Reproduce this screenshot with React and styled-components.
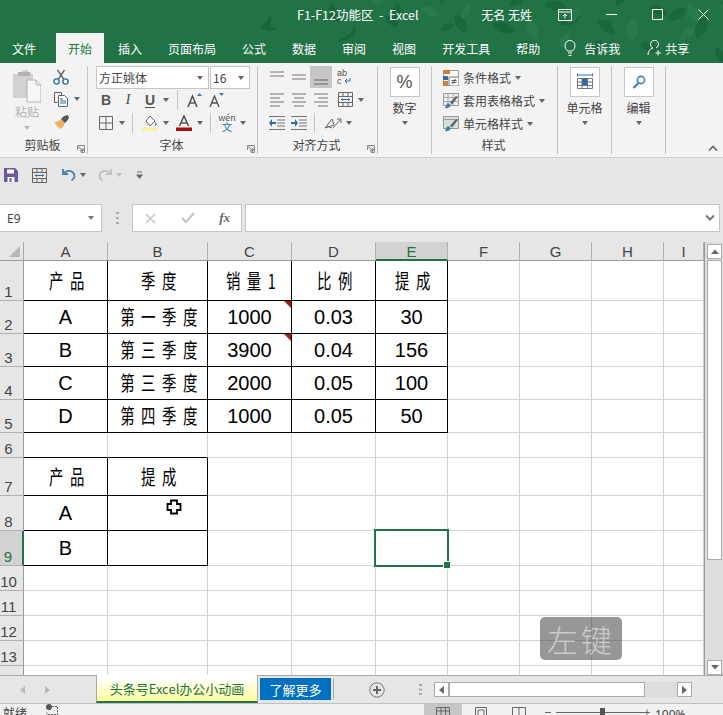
import React from "react";
import styled, { createGlobalStyle } from "styled-components";

const Global = createGlobalStyle`
  html, body { margin: 0; padding: 0; background: #fff; }
  * { box-sizing: border-box; }
`;
const UI = `"Noto Sans CJK SC", "Noto Sans", sans-serif`;

const Page = styled.div`
  width: 723px; height: 715px; overflow: hidden; display: flex; flex-direction: column;
  font-family: ${UI}; font-size: 12px; color: #444; background: #e6e6e6;
`;
const Header = styled.header`position: relative; height: 63px; flex: none; background: #217346; overflow: hidden;`;
const Leaves = styled.svg`position: absolute; inset: 0; pointer-events: none;`;
const TitleBar = styled.div`
  position: relative; height: 33px; display: flex; align-items: center; padding-left: 297px; color: #fff;
`;
const TitleText = styled.span`font-size: 12.5px; white-space: pre; margin-top: -4px;`;
const UserName = styled.span`margin-left: auto; margin-right: 18px; font-size: 12px; margin-top: -4px;`;
const TitleIcon = styled.div`width: ${p => p.$w}px; height: 28px; margin-top: -4px; display: flex; align-items: center; justify-content: center; flex: none;`;
const Controls = styled.div`display: flex; margin-left: 8px; margin-right: -3px;`;
const TabRow = styled.nav`position: relative; height: 30px; display: flex; align-items: stretch; gap: 2px; color: #fff;`;
const Tab = styled.div`
  padding: 0 12px; display: flex; align-items: center; font-size: 12px; padding-top: 1px;
  ${p => p.$first && "margin-right: 6px;"}
  ${p => p.$active && "background: #f3f3f3; color: #217346;"}
`;
const Tell = styled.div`display: flex; align-items: center; gap: 8px; margin-left: 10px; font-size: 12px;`;
const Share = styled.div`display: flex; align-items: center; gap: 2px; margin-left: 25px; font-size: 12px;`;

const Ribbon = styled.section`
  position: relative; flex: none; height: 95px; background: #f3f3f3; display: flex; border-bottom: 1px solid #d0d0d0;
`;
const Group = styled.div`
  width: ${p => p.$w}px; height: 88px; margin-top: 3px; flex: none; position: relative;
  display: flex; flex-direction: column;
  border-right: 1px solid #c4c4c4;
`;
const GroupBody = styled.div`
  height: 70px; flex: none; display: flex; flex-direction: ${p => p.$col ? "column" : "row"};
  padding-left: ${p => p.$pl || 0}px; ${p => p.$center && "align-items: center;"}
`;
const GroupLabel = styled.div`text-align: center; font-size: 12px; line-height: 18px; color: #444; padding-right: 2px;`;
const Launcher = styled.svg`position: absolute; right: 2px; bottom: 1px;`;
const Collapse = styled.svg`position: absolute; right: 5px; bottom: 6px;`;

const PasteCol = styled.div`width: 30px; margin-top: 3px; display: flex; flex-direction: column; align-items: center; color: #b4b4b4;`;
const PasteLabel = styled.div`font-size: 12px; line-height: 16px; margin-top: 1px;`;
const SmallCol = styled.div`margin-left: 11px; display: flex; flex-direction: column;`;
const Row = styled.div`height: 23px; display: flex; align-items: center; ${p => p.$h && `height:${p.$h}px;`} ${p => p.$gap && `margin-bottom:${p.$gap}px;`}`;
const IconBtn = styled.div`
  width: ${p => p.$w || 22}px; height: 22px; flex: none; display: flex; align-items: center; justify-content: center;
  ${p => p.$active && "background: #c6c6c6;"} ${p => p.$ml && `margin-left:${p.$ml}px;`}
`;
const CaretBox = styled.div`width: 10px; height: 22px; flex: none; display: flex; align-items: center; justify-content: center;`;
const Tri = styled.i`
  display: block; width: 0; height: 0; border-left: 3.5px solid transparent; border-right: 3.5px solid transparent;
  border-top: 4px solid ${p => p.$c || "#666"};
`;
const Sep = styled.div`width: 1px; height: 20px; background: #c6c6c6; margin: 0 ${p => p.$m || 5}px; flex: none;`;
const Combos = styled.div`height: 22px; margin-bottom: 0; display: flex; gap: 1px; margin-left: 1px;`;
const Combo = styled.div`
  width: ${p => p.$w}px; height: 23px; background: #fff; border: 1px solid #c6c6c6; display: flex; align-items: center;
  justify-content: space-between; padding: 0 5px 0 2px; font-size: 12px; color: #444;
`;
const Big = styled.div`
  width: 30px; height: 30px; margin-top: 1px; background: #fff; border: 1px solid #c6c6c6; flex: none;
  display: flex; align-items: center; justify-content: center; font-size: 18px; color: #555; font-family: "Liberation Sans", sans-serif;
`;
const BigLabel = styled.div`font-size: 12px; line-height: 18px; margin-top: 2px; margin-bottom: 4px; white-space: nowrap;`;
const StyleRow = styled.div`display: flex; align-items: center; gap: 4px; height: 23px; font-size: 12px; padding-left: 11px;`;

const Qat = styled.div`height: 34px; flex: none; display: flex; align-items: center; padding-left: 3px;`;
const QatBtn = styled.div`width: ${p => p.$w}px; flex: none; display: flex; align-items: center; justify-content: center; ${p => p.$ml && `margin-left:${p.$ml}px;`}`;

const FormulaBar = styled.div`height: 28px; margin: 12px 0 10px; flex: none; display: flex; align-items: stretch;`;
const NameBox = styled.div`
  width: 102px; background: #fff; border: 1px solid #c6c6c6; border-left: none; display: flex; align-items: center;
  justify-content: space-between; padding: 0 7px 0 7px; font-family: "Noto Sans", sans-serif; font-size: 12px; color: #444;
`;
const Grip = styled.div`width: 30px; display: flex; align-items: center; justify-content: center;`;
const FxBox = styled.div`
  width: 110px; background: #fff; border: 1px solid #c6c6c6; display: flex; align-items: center; justify-content: space-between; padding: 0 11px 0 12px;
`;
const FxText = styled.span`font-family: "Liberation Serif", serif; font-style: italic; font-weight: 700; font-size: 13px; color: #666;`;
const Input = styled.div`
  flex: 1; margin-left: 3px; margin-right: 3px; background: #fff; border: 1px solid #c6c6c6;
  display: flex; align-items: center; justify-content: flex-end; padding-right: 3px;
`;

const SheetArea = styled.div`height: 433px; flex: none; display: flex;`;
const Sheet = styled.div`
  position: relative; width: 705px; flex: none; overflow: hidden; background: #fff; border-right: 1px solid #9a9a9a;
`;
const Grid = styled.div`
  display: grid;
  grid-template-columns: 24px 84px 100px 84px 84px 72px 72px 72px 72px 40px;
  grid-template-rows: 19px 40px 33px 33px 33px 33px 25px 38px 35px 35px 25px 25px 25px 25px 25px;
`;
const Corner = styled.div`
  position: relative; background: #e6e6e6; border-right: 1px solid #a8a8a8; border-bottom: 1px solid #9b9b9b;
  &::after { content: ""; position: absolute; right: 3px; bottom: 3px; border-style: solid; border-width: 0 0 11px 11px; border-color: transparent transparent #b8b8b8 transparent; }
`;
const ColHead = styled.div`
  background: ${p => p.$active ? "#d2d2d2" : "#e6e6e6"}; color: ${p => p.$active ? "#217346" : "#444"};
  border-right: 1px solid #b0b0b0; border-bottom: ${p => p.$active ? "2px solid #217346" : "1px solid #9b9b9b"};
  font: 15px/19px "Liberation Sans", sans-serif; text-align: center; overflow: hidden;
`;
const RowHead = styled.div`
  background: ${p => p.$active ? "#d2d2d2" : "#e6e6e6"}; color: ${p => p.$active ? "#217346" : "#444"};
  border-right: ${p => p.$active ? "2px solid #217346" : "1px solid #9b9b9b"}; border-bottom: 1px solid #b0b0b0;
  font: 15px/17px "Liberation Sans", sans-serif; display: flex; align-items: flex-end; justify-content: center; padding-right: 6px;
`;
const Cell = styled.div`
  position: relative; display: flex; align-items: center; justify-content: center; color: #000;
  font: 20px "Liberation Sans", sans-serif;
  border-right: 1px solid ${p => p.$box ? "#000" : "#d4d4d4"};
  border-bottom: 1px solid ${p => (p.$box || p.$under) ? "#000" : "#d4d4d4"};
  ${p => p.$selected && `
    &::before { content: ""; position: absolute; left: -2px; top: -2px; right: -2px; bottom: -2px; border: 2px solid #217346; z-index: 2; }
    &::after { content: ""; position: absolute; right: -4px; bottom: -4px; width: 6px; height: 6px; background: #217346; border: 1px solid #fff; z-index: 3; }
  `}
`;
const Zh = styled.span`
  display: inline-block; flex: none; white-space: nowrap; font: 400 20px/24px "Noto Sans CJK SC", sans-serif;
  letter-spacing: 9px; margin-right: -9px; transform: scaleX(.72);
`;
const Comment = styled.i`
  position: absolute; right: 0; top: 0; border-style: solid; border-width: 0 7px 7px 0; border-color: transparent #a61c1c transparent transparent;
`;
const Pointer = styled.svg`position: absolute; left: 58px; top: 3px; z-index: 2;`;
const Watermark = styled.div`
  position: absolute; left: 540px; top: 375px; width: 82px; height: 43px; border-radius: 5px; background: rgba(70,70,70,.56);
  color: rgba(255,255,255,.5); font: 300 31px/43px "Noto Sans CJK SC", sans-serif; letter-spacing: 3px; text-align: center; z-index: 4;
`;

const VScroll = styled.div`width: 18px; flex: none; background: #dcdedd; display: flex; flex-direction: column; align-items: flex-end; padding: 2px 1px 0 0;`;
const ScrollBtn = styled.div`
  width: ${p => p.$w || 15}px; height: ${p => p.$h || 15}px; flex: none; background: #fff; border: 1px solid #ababab;
  display: flex; align-items: center; justify-content: center;
`;
const VThumb = styled.div`width: 15px; height: 300px; background: #fff; border: 1px solid #ababab; margin-top: 1px; flex: none;`;
const VGap = styled.div`flex: 1;`;

const TabBar = styled.div`
  height: 28px; flex: none; display: flex; align-items: stretch; background: #e6e6e6; border-top: 1px solid #a8a8a8;
`;
const TabNav = styled.div`width: 96px; flex: none; display: flex; align-items: center; padding-left: 20px; gap: 20px;`;
const SheetTab = styled.div`
  width: 162px; flex: none; margin-top: -1px; background: linear-gradient(#fff 10%, #ffff9c 100%);
  border-left: 1px solid #a8a8a8; border-right: 1px solid #a8a8a8; border-bottom: 2px solid #217346;
  color: #217346; font-size: 13px; display: flex; align-items: center; justify-content: center; white-space: nowrap;
`;
const MoreTab = styled.div`
  width: 71px; height: 22px; margin: 2px 0 0 2px; flex: none; background: #0070c0; color: #fff; font-size: 13px;
  display: flex; align-items: center; justify-content: center;
`;
const TabEnd = styled.div`width: 1px; height: 20px; background: #a8a8a8; margin: 3px 0 0 2px; flex: none;`;
const AddWrap = styled.div`width: 85px; flex: none; padding-left: 35px; display: flex; align-items: center;`;
const Dots = styled.div`width: 15px; flex: none; display: flex; align-items: center;`;
const HScroll = styled.div`width: 258px; height: 15px; margin-top: 6px; flex: none; display: flex; background: #dcdedd;`;
const HThumb = styled.div`width: 196px; background: #fff; border: 1px solid #ababab; flex: none;`;

const Status = styled.footer`
  height: 12px; flex: none; background: #f1f1f1; border-top: 1px solid #c0c0c0; display: flex; align-items: flex-start; overflow: hidden; color: #444;
`;
const Ready = styled.span`font-size: 12px; line-height: 17px; margin-left: 3px; width: 43px;`;
const ViewBtn = styled.div`
  width: ${p => p.$w}px; height: 12px; flex: none; display: flex; justify-content: center; padding-top: 3px;
  ${p => p.$active && "background: #c6c6c6;"} ${p => p.$ml && `margin-left:${p.$ml}px;`}
`;
const Zoom = styled.div`width: 117px; flex: none; margin-left: 7px; display: flex; align-items: flex-start; padding-top: 4px;`;
const ZoomText = styled.span`font: 12px/16px "Noto Sans", sans-serif; margin-left: 5px; margin-top: -1px;`;

const G = ({ w = 16, h = 16, vb, children }) => (
  <svg width={w} height={h} viewBox={vb || `0 0 ${w} ${h}`} style={{ display: "block", flex: "none" }} fill="none">{children}</svg>
);
const Lines = ({ rows, c = "#757575" }) => (
  <G w={18} h={16}>{rows.map(([a, b, y, col], i) => <path key={i} d={`M${a} ${y}H${b}`} stroke={col || c} />)}</G>
);
const Caret = ({ c }) => <CaretBox><Tri $c={c} /></CaretBox>;

const Paste = () => (
  <G w={28} h={34}>
    <path d="M0 5h6v-2h3v-2h6v2h3v2h2v24H0z" fill="#d2d2d2" />
    <path d="M5 3h12v4H5z" fill="#b5b5b5" />
    <path d="M14 11h9l5 5v17H14z" fill="#f6f6f6" stroke="#b5b5b5" />
    <path d="M23 11v5h5" stroke="#b5b5b5" />
  </G>
);
const Scissors = () => (
  <G w={16} h={16}>
    <circle cx="3.5" cy="12.5" r="2.6" stroke="#2f6ea5" strokeWidth="1.4" />
    <circle cx="12.5" cy="12.5" r="2.6" stroke="#2f6ea5" strokeWidth="1.4" />
    <path d="M5 10.5 11.5 1M11 10.5 4.5 1" stroke="#666" strokeWidth="1.4" />
  </G>
);
const Copy = () => (
  <G w={16} h={16}>
    <path d="M1.5 1.5h7v3M1.5 1.5v10h3" stroke="#666" />
    <path d="M5.5 4.5h6l3 3v8h-9z" fill="#fff" stroke="#666" />
    <path d="M7 8h3M7 10h6M7 12h6" stroke="#2f6ea5" />
  </G>
);
const Brush = () => (
  <G w={17} h={16}>
    <path d="M1 8c3 0 5-1 7-3l4 4c-1 3-3 5-5 6C5 13 3 11 1 8z" fill="#f0b35c" />
    <path d="M8 5l3-3 4-1 1 3-2 3-2 2z" fill="#555" />
  </G>
);
const Borders = () => (
  <G w={14} h={14}><path d="M.5.5h13v13H.5zM7 .5v13M.5 7h13" stroke="#666" /></G>
);
const LetterB = styled.span`font: 700 14px "Liberation Sans", sans-serif; color: #555; ${p => p.$i && "font-style: italic; font-weight: 400; font-family: 'Liberation Serif', serif; font-size: 15px;"} ${p => p.$u && "text-decoration: underline; text-underline-offset: 2px;"}`;
const GrowA = ({ up }) => (
  <G w={16} h={16}>
    <path d="M1 15 5.5 4 10 15M3 11h5" stroke="#555" strokeWidth={up ? 1.6 : 1.4} />
    <path d={up ? "M10 4l2.5-3L15 4z" : "M10 1l2.5 3L15 1z"} fill="#3f7fb5" />
  </G>
);
const Fill = () => (
  <G w={16} h={16}>
    <path d="M8 1l5 5-5 5-4-5z" fill="#fff" stroke="#666" />
    <path d="M13.5 6.5c1 2 1.5 3 .5 4s-1.500-1-.5-4z" fill="#3f7fb5" />
    <path d="M0 12.500h16V16H0z" fill="#ffef9e" />
  </G>
);
const FontColor = () => (
  <G w={16} h={16}>
    <path d="M3.500 11 8 1l4.500 10M5 8h6" stroke="#555" strokeWidth="1.6" />
    <path d="M0 12.500h16V16H0z" fill="#a50e0e" />
  </G>
);
const WenText = styled.span`display: flex; flex-direction: column; align-items: center; font: 9px/9px "Noto Sans CJK SC", sans-serif; color: #555;`;
const WenZh = styled.span`color: #2f6ea5; font-size: 10px; line-height: 10px;`;
const Orient = () => (
  <G w={20} h={16}>
    <path d="M2 13 9 4l2 6zM4 11l5 2" stroke="#666" />
    <path d="M10 13 17 5M14 4h4v4" stroke="#666" />
  </G>
);
const IndentL = ({ right }) => (
  <G w={18} h={16}>
    <path d="M1 1.500h16M9 5h8M9 8h8M9 11h8M1 14.500h16" stroke="#757575" />
    <path d={right ? "M1 7h4V4l3 4-3 4V9H1z" : "M8 7H4V4L1 8l3 4V9h4z"} fill="#2f6ea5" />
  </G>
);
const Wrap = () => (
  <G w={16} h={16}>
    <text x="0" y="7" fontSize="9" fontFamily="Liberation Sans" fill="#555">ab</text>
    <text x="0" y="15" fontSize="9" fontFamily="Liberation Sans" fill="#555">c</text>
    <path d="M13 9v3H8M10 10l-2 2 2 2" stroke="#2f6ea5" />
  </G>
);
const Merge = ({ w = 15, h = 15 }) => (
  <G w={w} h={h} vb="0 0 15 15">
    <path d="M.5.5h14v14H.5zM.5 4.500h14M.5 10.500h14M5 .5v4M10 .5v4M5 10.500v4M10 10.500v4" stroke="#666" />
    <path d="M3 7.500h9" stroke="#2f6ea5" />
    <path d="M3 7.500l2-1.500v3zM12 7.500l-2-1.500v3z" fill="#2f6ea5" />
  </G>
);
const CondFormat = () => (
  <G w={16} h={16}>
    <path d="M0 0h16v16H0z" fill="#fff" />
    <path d="M.5.5h15v15H.5z" stroke="#999" />
    <path d="M0 0h7v4H0z" fill="#d27f2d" /><path d="M0 6h5v4H0z" fill="#2f6ea5" /><path d="M0 11h5v5H0z" fill="#d27f2d" />
    <path d="M6 7h10v9H6z" fill="#fff" stroke="#777" />
    <path d="M8.500 10.500h5M8.500 12.500h5M12.500 9l-3 5" stroke="#555" />
  </G>
);
const TableBrush = ({ plain }) => (
  <G w={16} h={16}>
    <path d="M.5.5h15v12H.5z" fill={plain ? "#d8dedd" : "#eee"} stroke="#999" />
    {!plain && <path d="M5 .5v12M10 .5v12M.5 4.500h15M.5 8.500h15" stroke="#aaa" />}
    {plain && <path d="M.5 3.500h15" stroke="#999" />}
    <path d="M2 15c3 1 5-1 6-3l-3-2c-2 1-2 3-3 5z" fill="#3f7fb5" />
    <path d="M7 9.500 13 3l2 1-6 7.500z" fill="#666" />
  </G>
);
const CellsIcon = () => (
  <G w={16} h={18}>
    <path d="M.5.5v3M15.500.5v3M1 2h14" stroke="#2f6ea5" />
    <path d="M.5 5.500h15v10H.5zM.5 9h15M.5 12.500h15M5 5.500v10M10.500 5.500v10" stroke="#777" />
    <path d="M5 5.500h5.500V12H5z" fill="#2f6ea5" />
  </G>
);
const Magnifier = () => (
  <G w={14} h={14}>
    <circle cx="9" cy="5" r="3.600" stroke="#3f7fb5" strokeWidth="1.600" />
    <path d="M6.500 8 1.500 13" stroke="#3f7fb5" strokeWidth="2.200" />
  </G>
);
const LaunchIcon = () => (
  <Launcher width="8" height="8" viewBox="0 0 8 8" fill="none">
    <path d="M.5 5V.5H7.500V7.500H4" stroke="#8a8a8a" />
    <path d="M1 1.500 6 6M6 3v3H3" stroke="#666" />
  </Launcher>
);

const leafSeeds = [
  [372,4,-30,.9],[385,16,40,.8],[398,3,100,1],[420,8,20,.9],[440,2,-60,.7],[455,14,60,1],[470,4,120,.8],[492,24,20,1.1],[510,6,-40,1],[528,18,70,1.1],
  [545,4,10,1],[560,24,-20,1],[580,8,130,.9],[598,20,40,1],[616,5,-50,1],[632,18,90,1.1],[650,6,30,.9],[668,20,-30,1],[688,4,60,1],[705,16,110,1.1],
  [520,42,30,.9],[560,48,-60,.8],[600,38,100,.8],[640,44,20,.9],[680,40,-40,.9],[716,48,60,.8],[440,30,-20,.7],[470,40,50,.7],[330,4,70,.6],[720,2,10,.8],
];

const headings = ["A", "B", "C", "D", "E", "F", "G", "H", "I"];
const tableRows = {
  1: [{ zh: "产品" }, { zh: "季度" }, { zh: "销量1" }, { zh: "比例" }, { zh: "提成" }],
  2: [{ t: "A" }, { zh: "第一季度" }, { t: "1000", note: true }, { t: "0.03" }, { t: "30" }],
  3: [{ t: "B" }, { zh: "第三季度" }, { t: "3900", note: true }, { t: "0.04" }, { t: "156" }],
  4: [{ t: "C" }, { zh: "第三季度" }, { t: "2000" }, { t: "0.05" }, { t: "100" }],
  5: [{ t: "D" }, { zh: "第四季度" }, { t: "1000" }, { t: "0.05" }, { t: "50" }],
  7: [{ zh: "产品" }, { zh: "提成" }],
  8: [{ t: "A" }, { t: "", pointer: true }],
  9: [{ t: "B" }, { t: "" }],
};

const SheetGrid = () => {
  const rows = [];
  for (let r = 1; r <= 14; r++) {
    rows.push(<RowHead key={`h${r}`} $active={r === 9}>{r}</RowHead>);
    for (let c = 0; c < 9; c++) {
      const data = tableRows[r] && tableRows[r][c];
      const under = r === 6 && c < 2;
      rows.push(
        <Cell key={`${r}-${c}`} $box={!!data} $under={under} $selected={r === 9 && c === 4}>
          {data && data.zh && <Zh>{data.zh}</Zh>}
          {data && data.t}
          {data && data.note && <Comment />}
          {data && data.pointer && (
            <Pointer width="16" height="16" viewBox="0 0 16 16">
              <path d="M5 1.500h6v3.500h3.500v6H11v3.500H5V11H1.500V5H5z" fill="#fff" stroke="#000" strokeWidth="1.800" />
            </Pointer>
          )}
        </Cell>
      );
    }
  }
  return (
    <Grid>
      <Corner />
      {headings.map(h => <ColHead key={h} $active={h === "E"}>{h}</ColHead>)}
      {rows}
    </Grid>
  );
};

export default function App() {
  return (
    <Page>
      <Global />
      <Header>
        <Leaves width="723" height="63" viewBox="0 0 723 63">
          {leafSeeds.map(([x, y, a, s], i) => (
            <path key={i} transform={`translate(${x} ${y}) rotate(${a}) scale(${s})`} d="M0 0C6-7 16-7 22 0 16 6 6 6 0 0z" fill={i % 3 === 0 ? "#2a7c4f" : "#1a6439"} opacity=".8" />
          ))}
          <path d="M260 28c4-5 8-6 10-14 2 5 2 9 0 13 3 0 5 1 6 3-5 0-9 0-16-2z" fill="#1a6439" />
          <path d="M328 18c3-5 4-10 4-15 3 4 5 8 5 14l5 4c-5 1-10 0-14-3z" fill="#1a6439" />
          <path d="M338 42c3-4 6-6 12-8l4-9c2 3 2 6 1 9-4 4-10 7-17 8z" fill="#1a6439" />
        </Leaves>
        <TitleBar>
          <TitleText>{"F1-F12功能区  -  Excel"}</TitleText>
          <UserName>无名 无姓</UserName>
          <TitleIcon $w={30}>
            <G w={14} h={12}><path d="M.5.5h13v11H.5zM.5 3h13M7 9.500V5M5 7l2-2 2 2" stroke="#fff" /></G>
          </TitleIcon>
          <Controls>
            <TitleIcon $w={46}><G w={11} h={11}><path d="M0 5.500h11" stroke="#fff" /></G></TitleIcon>
            <TitleIcon $w={46}><G w={11} h={11}><path d="M.5.5h10v10H.5z" stroke="#fff" /></G></TitleIcon>
            <TitleIcon $w={46}><G w={11} h={11}><path d="M.5.5l10 10M10.500.5l-10 10" stroke="#fff" /></G></TitleIcon>
          </Controls>
        </TitleBar>
        <TabRow>
          <Tab $first>文件</Tab>
          <Tab $active>开始</Tab>
          <Tab>插入</Tab>
          <Tab>页面布局</Tab>
          <Tab>公式</Tab>
          <Tab>数据</Tab>
          <Tab>审阅</Tab>
          <Tab>视图</Tab>
          <Tab>开发工具</Tab>
          <Tab>帮助</Tab>
          <Tell>
            <G w={12} h={18}><path d="M3.500 12C2 10 1 9 1 6.500a5 5 0 0 1 10 0C11 9 10 10 8.500 12zM4 14h4M4.500 16.500h3" stroke="#fff" /></G>
            告诉我
          </Tell>
          <Share>
            <G w={16} h={16}><path d="M1 15c0-4 2-6 5-7a4 4 0 1 1 3 0M11 10v5.500M8.500 13H14" stroke="#fff" /></G>
            共享
          </Share>
        </TabRow>
      </Header>

      <Ribbon>
        <Group $w={88}>
          <GroupBody $pl={12}>
            <PasteCol>
              <Paste />
              <PasteLabel>粘贴</PasteLabel>
              <Tri $c="#bbb" style={{ marginTop: 6 }} />
            </PasteCol>
            <SmallCol>
              <Row $h={21}><IconBtn $w={16}><Scissors /></IconBtn></Row>
              <Row><IconBtn $w={16}><Copy /></IconBtn><CaretBox style={{ marginLeft: 3 }}><Tri /></CaretBox></Row>
              <Row><IconBtn $w={16}><Brush /></IconBtn></Row>
            </SmallCol>
          </GroupBody>
          <GroupLabel>剪贴板</GroupLabel>
          <LaunchIcon />
        </Group>

        <Group $w={170}>
          <GroupBody $col $pl={7}>
            <Combos>
              <Combo $w={113}>方正姚体<Tri /></Combo>
              <Combo $w={40}>16<Tri /></Combo>
            </Combos>
            <Row>
              <IconBtn><LetterB>B</LetterB></IconBtn>
              <IconBtn><LetterB $i>I</LetterB></IconBtn>
              <IconBtn><LetterB $u>U</LetterB></IconBtn>
              <Caret />
              <Sep $m={6} />
              <IconBtn><GrowA up /></IconBtn>
              <IconBtn><GrowA /></IconBtn>
            </Row>
            <Row>
              <IconBtn><Borders /></IconBtn>
              <Caret />
              <Sep />
              <IconBtn $ml={1}><Fill /></IconBtn>
              <Caret />
              <IconBtn $ml={2}><FontColor /></IconBtn>
              <Caret />
              <Sep />
              <IconBtn><WenText>wén<WenZh>文</WenZh></WenText></IconBtn>
              <Caret />
            </Row>
          </GroupBody>
          <GroupLabel>字体</GroupLabel>
          <LaunchIcon />
        </Group>

        <Group $w={120}>
          <GroupBody $col $pl={8}>
            <Row $h={22} $gap={0}>
              <IconBtn><Lines rows={[[2, 16, 3], [2, 16, 7]]} /></IconBtn>
              <IconBtn><Lines rows={[[2, 16, 6], [2, 16, 10]]} /></IconBtn>
              <IconBtn $active><Lines rows={[[2, 16, 11], [2, 16, 15]]} c="#666" /></IconBtn>
              <IconBtn $ml={2}><Wrap /></IconBtn>
            </Row>
            <Row>
              <IconBtn><Lines rows={[[2, 16, 2], [2, 12, 6], [2, 16, 10], [2, 12, 14]]} /></IconBtn>
              <IconBtn><Lines rows={[[2, 16, 2], [4, 14, 6], [2, 16, 10], [4, 14, 14]]} /></IconBtn>
              <IconBtn><Lines rows={[[2, 16, 2], [6, 16, 6], [2, 16, 10], [6, 16, 14]]} /></IconBtn>
              <IconBtn $ml={2}><Merge /></IconBtn>
              <Caret />
            </Row>
            <Row>
              <IconBtn><IndentL /></IconBtn>
              <IconBtn><IndentL right /></IconBtn>
              <Sep $m={4} />
              <IconBtn $ml={3}><Orient /></IconBtn>
              <Caret />
            </Row>
          </GroupBody>
          <GroupLabel>对齐方式</GroupLabel>
          <LaunchIcon />
        </Group>

        <Group $w={54}>
          <GroupBody $col $center>
            <Big>%</Big>
            <BigLabel>数字</BigLabel>
            <Tri />
          </GroupBody>
        </Group>

        <Group $w={126}>
          <GroupBody $col>
            <StyleRow><CondFormat />条件格式<Tri /></StyleRow>
            <StyleRow><TableBrush />套用表格格式<Tri /></StyleRow>
            <StyleRow><TableBrush plain />单元格样式<Tri /></StyleRow>
          </GroupBody>
          <GroupLabel>样式</GroupLabel>
        </Group>

        <Group $w={54}>
          <GroupBody $col $center>
            <Big><CellsIcon /></Big>
            <BigLabel>单元格</BigLabel>
            <Tri />
          </GroupBody>
        </Group>

        <Group $w={54}>
          <GroupBody $col $center>
            <Big><Magnifier /></Big>
            <BigLabel>编辑</BigLabel>
            <Tri />
          </GroupBody>
        </Group>
        <Collapse width="10" height="6" viewBox="0 0 10 6" fill="none"><path d="M1 5.500 5 1.500l4 4" stroke="#666" strokeWidth="1.600" /></Collapse>
      </Ribbon>

      <Qat>
        <QatBtn $w={16}>
          <G w={14} h={14}>
            <path d="M0 0h11l3 3v11H0z" fill="#6a5a9c" />
            <path d="M3 1.500h7v4H3z" fill="#fff" /><path d="M3.500 9h7v5h-7z" fill="#fff" /><path d="M5.500 10h2v4h-2z" fill="#6a5a9c" />
          </G>
        </QatBtn>
        <QatBtn $w={16} $ml={12}><Merge /></QatBtn>
        <QatBtn $w={16} $ml={14}>
          <G w={16} h={14}><path d="M2 1v5h5M2.500 5.500C5 2.500 9 2 12 4.500c2.500 2.500 2 6-1.500 8" stroke="#3f7fb5" strokeWidth="1.800" /></G>
        </QatBtn>
        <QatBtn $w={10} $ml={1}><Tri /></QatBtn>
        <QatBtn $w={16} $ml={9}>
          <G w={16} h={14}><path d="M14 1v5H9M13.500 5.500C11 2.500 7 2 4 4.500c-2.500 2.500-2 6 1.500 8" stroke="#c0c0c0" strokeWidth="1.800" /></G>
        </QatBtn>
        <QatBtn $w={10} $ml={1}><Tri $c="#c0c0c0" /></QatBtn>
        <QatBtn $w={8} $ml={11}>
          <G w={7} h={8}><path d="M1 1h5" stroke="#666" /><path d="M0 3.500h7L3.500 8z" fill="#666" /></G>
        </QatBtn>
      </Qat>

      <FormulaBar>
        <NameBox>E9<Tri $c="#777" /></NameBox>
        <Grip><G w={3} h={13}><path d="M0 1h3M0 6h3M0 11h3" stroke="#aaa" strokeWidth="2" strokeDasharray="3 0" /></G></Grip>
        <FxBox>
          <G w={11} h={11}><path d="M1 1l9 9M10 1l-9 9" stroke="#c6c6c6" strokeWidth="1.500" /></G>
          <G w={14} h={12}><path d="M1 6l4 4 8-9" stroke="#c6c6c6" strokeWidth="2.200" /></G>
          <FxText>fx</FxText>
        </FxBox>
        <Input><G w={12} h={8}><path d="M2 1.500l4 4 4-4" stroke="#777" strokeWidth="2" /></G></Input>
      </FormulaBar>

      <SheetArea>
        <Sheet>
          <SheetGrid />
          <Watermark>左键</Watermark>
        </Sheet>
        <VScroll>
          <ScrollBtn><G w={8} h={5}><path d="M0 5l4-4.500L8 5z" fill="#666" /></G></ScrollBtn>
          <VThumb />
          <VGap />
          <ScrollBtn style={{ marginBottom: 0 }}><G w={8} h={5}><path d="M0 0l4 4.500L8 0z" fill="#666" /></G></ScrollBtn>
        </VScroll>
      </SheetArea>

      <TabBar>
        <TabNav>
          <G w={5} h={8}><path d="M5 0 0 4l5 4z" fill="#bbb" /></G>
          <G w={5} h={8}><path d="M0 0l5 4-5 4z" fill="#bbb" /></G>
        </TabNav>
        <SheetTab>头条号Excel办公小动画</SheetTab>
        <MoreTab>了解更多</MoreTab>
        <TabEnd />
        <AddWrap>
          <G w={16} h={16}><circle cx="8" cy="8" r="7.200" stroke="#777" /><path d="M4 8h8M8 4v8" stroke="#666" strokeWidth="2" /></G>
        </AddWrap>
        <Dots><G w={3} h={11}><path d="M0 1h3M0 5.500h3M0 10h3" stroke="#aaa" strokeWidth="1.800" /></G></Dots>
        <HScroll>
          <ScrollBtn><G w={5} h={8}><path d="M5 0 0 4l5 4z" fill="#666" /></G></ScrollBtn>
          <HThumb />
          <VGap />
          <ScrollBtn><G w={5} h={8}><path d="M0 0l5 4-5 4z" fill="#666" /></G></ScrollBtn>
        </HScroll>
      </TabBar>

      <Status>
        <Ready>就绪</Ready>
        <G w={12} h={11}><circle cx="3" cy="3" r="3" fill="#555" /><path d="M6 2.500h5.500v8H1V8" stroke="#666" strokeDasharray="2 1" /></G>
        <ViewBtn $active $w={38} $ml={366}><G w={14} h={10}><path d="M.5.5h13v10H.5zM.5 4h13M5 .5v10M9.500.5v10" stroke="#666" /></G></ViewBtn>
        <ViewBtn $w={38}><G w={14} h={10}><path d="M1.500.5h11v10h-11zM4 3h6v7H4z" stroke="#666" /></G></ViewBtn>
        <ViewBtn $w={38}><G w={14} h={10}><path d="M.5.5h13v10H.5zM7 .5v10" stroke="#666" /></G></ViewBtn>
        <Zoom>
          <G w={99} h={8}>
            <path d="M0 4.500h6M11 4.500h96" stroke="#666" />
            <path d="M55 0h5v8h-5z" fill="#555" />
          </G>
          <G w={6} h={8}><path d="M0 4.500h6M3 1.500v6" stroke="#666" /></G>
          <ZoomText>100%</ZoomText>
        </Zoom>
      </Status>
    </Page>
  );
}
